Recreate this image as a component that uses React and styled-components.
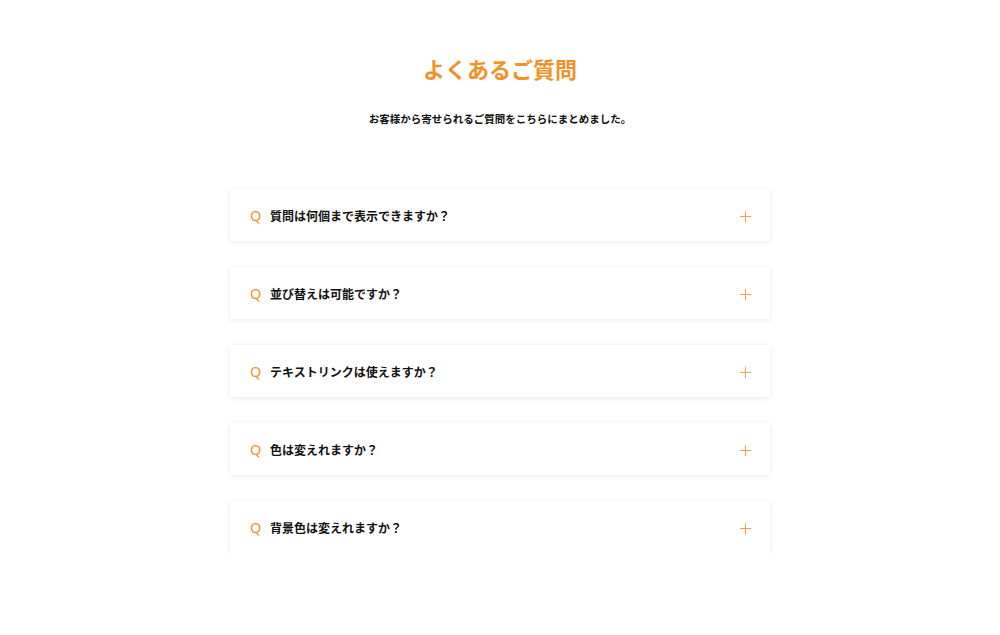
import React from "react";
import styled, { createGlobalStyle } from "styled-components";

const Global = createGlobalStyle`
  body {
    margin: 0;
    background: #ffffff;
    font-family: "Noto Sans CJK JP", "Noto Sans", sans-serif;
    color: #111;
  }
`;

const Page = styled.main`
  display: flex;
  flex-direction: column;
  align-items: center;
  padding-top: 51px;
`;

const Title = styled.h2`
  margin: 0;
  font-size: 22px;
  line-height: 34px;
  font-weight: 700;
  color: #f0922b;
`;

const Lead = styled.p`
  margin: 26px 0 0;
  font-size: 10.5px;
  line-height: 16px;
  font-weight: 700;
  color: #111;
`;

const List = styled.div`
  margin-top: 62px;
  width: 540px;
  display: flex;
  flex-direction: column;
  gap: 26px;
`;

const Item = styled.button`
  display: flex;
  align-items: center;
  height: 52px;
  padding: 0 19px 0 20px;
  border: none;
  background: #fff;
  box-shadow: 0 1px 6px rgba(0, 0, 0, 0.09);
  font-family: inherit;
  cursor: pointer;
  text-align: left;
`;

const Mark = styled.span`
  width: 20px;
  font-size: 14.5px;
  font-weight: 400;
  color: #f0922b;
  font-family: "Noto Sans", sans-serif;
`;

const Question = styled.span`
  flex: 1;
  font-size: 12px;
  font-weight: 700;
  color: #111;
`;

const Plus = styled.svg`
  width: 11px;
  height: 11px;
  margin-top: 2px;
`;

const questions = [
  "質問は何個まで表示できますか？",
  "並び替えは可能ですか？",
  "テキストリンクは使えますか？",
  "色は変えれますか？",
  "背景色は変えれますか？",
];

export default function App() {
  return (
    <>
      <Global />
      <Page>
        <Title>よくあるご質問</Title>
        <Lead>お客様から寄せられるご質問をこちらにまとめました。</Lead>
        <List>
          {questions.map((q) => (
            <Item key={q}>
              <Mark>Q</Mark>
              <Question>{q}</Question>
              <Plus viewBox="0 0 11 11">
                <path d="M5.5 0v11M0 5.5h11" stroke="#f4a04c" strokeWidth="1" fill="none" />
              </Plus>
            </Item>
          ))}
        </List>
      </Page>
    </>
  );
}
